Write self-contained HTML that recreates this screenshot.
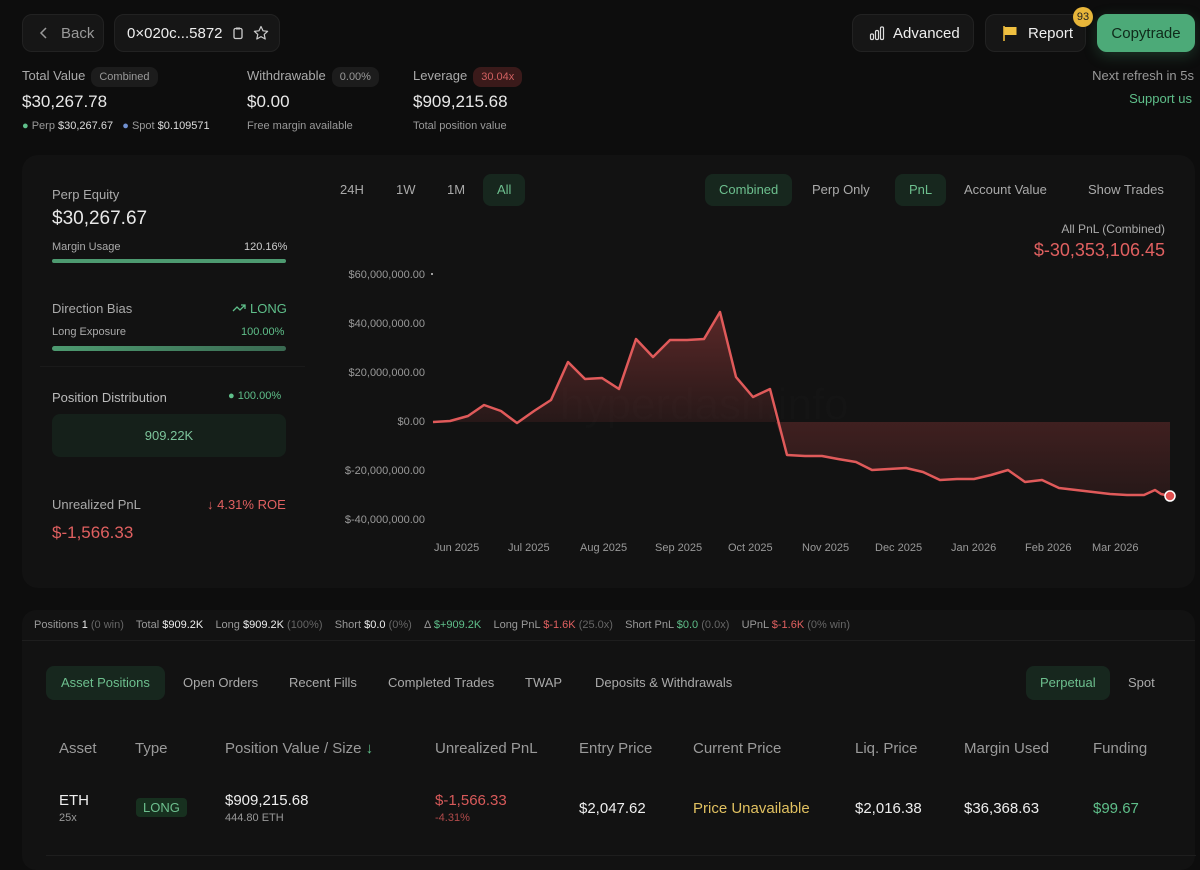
<!DOCTYPE html>
<html><head><meta charset="utf-8"><style>
*{box-sizing:border-box;margin:0;padding:0}
body{width:1200px;height:858px;background:#0d0d0d;font-family:"Liberation Sans",sans-serif;color:#e8e8e8;position:relative;overflow:hidden}
.a{position:absolute;white-space:nowrap}
.btn{position:absolute;background:#161616;border:1px solid #222;border-radius:10px;height:38px;top:14px;display:flex;align-items:center;font-size:15px}
.g{color:#8a8a8a}.gr{color:#5fbf8a}.rd{color:#e06060}
.pill{display:inline-block;background:#1c1c1c;border-radius:8px;padding:4px 8px;font-size:11px;color:#999;margin-left:6px}
.tab{position:absolute;font-size:13px;color:#aaa;height:32px;line-height:32px;padding:0 14px;border-radius:8px}
.tab.on{background:#17271e;color:#6dbf8e}
.th{position:absolute;top:740px;font-size:15px;color:#9a9a9a}
.td{position:absolute;top:792px;font-size:15px;color:#eee}
</style></head><body>
<div class="btn" style="left:22px;width:82px;padding-left:14px;color:#999"><svg width="14" height="14" viewBox="0 0 14 14"><path d="M9 2L4 7l5 5" stroke="#999" stroke-width="1.5" fill="none"/></svg><span style="margin-left:10px">Back</span></div>
<div class="btn" style="left:114px;width:166px;padding-left:12px;color:#eee">0×020c...5872
<svg style="margin-left:8px" width="14" height="14" viewBox="0 0 14 14"><rect x="3" y="2.5" width="8" height="10" rx="1.5" stroke="#ccc" fill="none" stroke-width="1.3"/><rect x="5" y="1.5" width="4" height="2" fill="#ccc"/></svg>
<svg style="margin-left:8px" width="16" height="16" viewBox="0 0 16 16"><path d="M8 1.5l2 4.3 4.6.5-3.4 3.1 1 4.6L8 11.6 3.8 14l1-4.6L1.4 6.3 6 5.8z" stroke="#ccc" fill="none" stroke-width="1.2" stroke-linejoin="round"/></svg></div>
<div class="btn" style="left:852px;width:122px;padding-left:16px;color:#eee"><svg width="16" height="16" viewBox="0 0 16 16" fill="none" stroke="#ddd" stroke-width="1.2"><rect x="1.5" y="9" width="3" height="5.5" rx="1.2"/><rect x="6.5" y="5.5" width="3" height="9" rx="1.2"/><rect x="11.5" y="2" width="3" height="12.5" rx="1.2"/></svg><span style="margin-left:8px">Advanced</span></div>
<div class="btn" style="left:985px;width:101px;padding-left:16px;color:#eee"><svg width="16" height="16" viewBox="0 0 16 16"><path d="M2 1v15" stroke="#e8b63a" stroke-width="1.6"/><path d="M2.5 2h12v8h-12z" fill="#f0c040"/></svg><span style="margin-left:10px">Report</span></div>
<div class="a" style="left:1073px;top:7px;width:20px;height:20px;border-radius:10px;background:#e8b63a;color:#222;font-size:11px;text-align:center;line-height:20px">93</div>
<div class="btn" style="left:1097px;width:98px;background:#4caa78;border-color:#4caa78;color:#0f2a1a;justify-content:center;box-shadow:0 4px 14px rgba(76,170,120,.25)">Copytrade</div>
<div class="a g" style="right:6px;top:68px;font-size:13px;color:#999">Next refresh in 5s</div>
<div class="a gr" style="right:8px;top:91px;font-size:13px">Support us</div>

<div class="a" style="left:22px;top:67px;font-size:13px;color:#aaa">Total Value<span class="pill">Combined</span></div>
<div class="a" style="left:22px;top:92px;font-size:17px">$30,267.78</div>
<div class="a" style="left:22px;top:120px;font-size:11px;color:#999"><span style="color:#5fbf8a">●</span> Perp <span style="color:#ddd">$30,267.67</span> &nbsp;&nbsp;<span style="color:#7090d0">●</span> Spot <span style="color:#ddd">$0.109571</span></div>
<div class="a" style="left:247px;top:67px;font-size:13px;color:#aaa">Withdrawable<span class="pill">0.00%</span></div>
<div class="a" style="left:247px;top:92px;font-size:17px">$0.00</div>
<div class="a" style="left:247px;top:120px;font-size:11px;color:#999">Free margin available</div>
<div class="a" style="left:413px;top:67px;font-size:13px;color:#aaa">Leverage<span class="pill" style="background:#3a1a1a;color:#d06060">30.04x</span></div>
<div class="a" style="left:413px;top:92px;font-size:17px">$909,215.68</div>
<div class="a" style="left:413px;top:120px;font-size:11px;color:#999">Total position value</div>

<div class="a" style="left:22px;top:155px;width:1173px;height:433px;background:#121212;border-radius:16px"></div>
<div class="a" style="left:52px;top:187px;font-size:13px;color:#aaa">Perp Equity</div>
<div class="a" style="left:52px;top:208px;font-size:19px">$30,267.67</div>
<div class="a" style="left:52px;top:241px;font-size:11px;color:#aaa">Margin Usage</div>
<div class="a" style="left:244px;top:241px;font-size:11px;color:#ccc">120.16%</div>
<div class="a" style="left:52px;top:259px;width:234px;height:4px;border-radius:2px;background:#4d9a70"></div>
<div class="a" style="left:52px;top:301px;font-size:13px;color:#aaa">Direction Bias</div>
<div class="a gr" style="left:232px;top:301px;font-size:13px"><svg width="14" height="10" viewBox="0 0 14 10" style="margin-right:4px"><path d="M1 8l4-4 3 3 5-5M9 2h4v4" stroke="#5fbf8a" stroke-width="1.3" fill="none"/></svg>LONG</div>
<div class="a" style="left:52px;top:326px;font-size:11px;color:#aaa">Long Exposure</div>
<div class="a gr" style="left:241px;top:326px;font-size:11px">100.00%</div>
<div class="a" style="left:52px;top:346px;width:234px;height:5px;border-radius:3px;background:linear-gradient(90deg,#4d9a70,#3a6a52)"></div>
<div class="a" style="left:40px;top:366px;width:265px;height:1px;background:#1a1a1a"></div>
<div class="a" style="left:52px;top:390px;font-size:13px;color:#bbb">Position Distribution</div>
<div class="a gr" style="left:228px;top:390px;font-size:11px">● 100.00%</div>
<div class="a" style="left:52px;top:414px;width:234px;height:43px;border-radius:8px;background:#15201a;color:#7cc49b;font-size:13px;text-align:center;line-height:43px">909.22K</div>
<div class="a" style="left:52px;top:497px;font-size:13px;color:#aaa">Unrealized PnL</div>
<div class="a rd" style="left:207px;top:497px;font-size:13px">↓ 4.31% ROE</div>
<div class="a rd" style="left:52px;top:523px;font-size:17px">$-1,566.33</div>

<div class="tab" style="left:326px;top:174px">24H</div>
<div class="tab" style="left:382px;top:174px">1W</div>
<div class="tab" style="left:433px;top:174px">1M</div>
<div class="tab on" style="left:483px;top:174px">All</div>
<div class="tab on" style="left:705px;top:174px">Combined</div>
<div class="tab" style="left:798px;top:174px">Perp Only</div>
<div class="tab on" style="left:895px;top:174px">PnL</div>
<div class="tab" style="left:950px;top:174px">Account Value</div>
<div class="tab" style="left:1074px;top:174px">Show Trades</div>
<div class="a" style="right:35px;top:222px;font-size:12px;color:#aaa">All PnL (Combined)</div>
<div class="a rd" style="right:35px;top:240px;font-size:18px">$-30,353,106.45</div>

<div class="a" style="left:336px;top:268px;font-size:11px;color:#999;width:89px;text-align:right;line-height:14px">
<div style="position:absolute;right:0;top:0">$60,000,000.00</div>
<div style="position:absolute;right:0;top:49px">$40,000,000.00</div>
<div style="position:absolute;right:0;top:98px">$20,000,000.00</div>
<div style="position:absolute;right:0;top:147px">$0.00</div>
<div style="position:absolute;right:0;top:196px">$-20,000,000.00</div>
<div style="position:absolute;right:0;top:245px">$-40,000,000.00</div></div>
<div class="a" style="left:432px;top:542px;font-size:11px;color:#999">
<span style="position:absolute;left:2px">Jun&nbsp;2025</span><span style="position:absolute;left:76px">Jul&nbsp;2025</span><span style="position:absolute;left:148px">Aug&nbsp;2025</span><span style="position:absolute;left:223px">Sep&nbsp;2025</span><span style="position:absolute;left:296px">Oct&nbsp;2025</span><span style="position:absolute;left:370px">Nov&nbsp;2025</span><span style="position:absolute;left:443px">Dec&nbsp;2025</span><span style="position:absolute;left:519px">Jan&nbsp;2026</span><span style="position:absolute;left:593px">Feb&nbsp;2026</span><span style="position:absolute;left:660px">Mar&nbsp;2026</span></div>
<div class="a" style="left:560px;top:380px;font-size:44px;color:#141414">hyperdash.info</div>
<svg class="a" style="left:0;top:0" width="1200" height="600">
<defs><linearGradient id="f" x1="0" y1="0" x2="0" y2="1"><stop offset="0" stop-color="#e05050" stop-opacity=".35"/><stop offset="1" stop-color="#e05050" stop-opacity=".1"/></linearGradient>
<linearGradient id="f2" x1="0" y1="0" x2="0" y2="1"><stop offset="0" stop-color="#e05050" stop-opacity=".22"/><stop offset="1" stop-color="#e05050" stop-opacity=".1"/></linearGradient></defs>
<circle cx="432" cy="274" r="1" fill="#ccc"/>
<path d="M433 422 L450 421 468 416 484 405 501 411 517 423 534 411 551 400 568 362 585 379 602 378 619 389 636 339 653 357 670 340 687 340 704 339 720 312 736 377 753 397 770 389 L776 422 Z" fill="url(#f)"/>
<path d="M776 422 L787 455 805 456 822 456 838 459 856 462 872 470 889 469 906 468 923 472 940 480 957 479 974 479 991 475 1008 470 1025 482 1042 480 1059 488 1076 490 1093 492 1110 494 1127 495 1144 495 1155 490 1161 494 1170 496 L1170 422 Z" fill="url(#f2)"/>
<path d="M433 422 L450 421 468 416 484 405 501 411 517 423 534 411 551 400 568 362 585 379 602 378 619 389 636 339 653 357 670 340 687 340 704 339 720 312 736 377 753 397 770 389 787 455 805 456 822 456 838 459 856 462 872 470 889 469 906 468 923 472 940 480 957 479 974 479 991 475 1008 470 1025 482 1042 480 1059 488 1076 490 1093 492 1110 494 1127 495 1144 495 1155 490 1161 494 1170 496" fill="none" stroke="#e05a5a" stroke-width="2.5" stroke-linejoin="round"/>
<circle cx="1170" cy="496" r="5" fill="#e05050" stroke="#fff" stroke-width="1.5"/>
</svg>

<div class="a" style="left:22px;top:610px;width:1173px;height:260px;background:#121212;border-radius:14px"></div>
<div class="a" style="left:22px;top:640px;width:1173px;height:1px;background:#1e1e1e"></div>
<div class="a" style="left:34px;top:619px;font-size:11px;color:#999">Positions <span style="color:#eee">1</span> <span style="color:#666">(0 win)</span> &nbsp;&nbsp; Total <span style="color:#eee">$909.2K</span> &nbsp;&nbsp; Long <span style="color:#eee">$909.2K</span> <span style="color:#666">(100%)</span> &nbsp;&nbsp; Short <span style="color:#eee">$0.0</span> <span style="color:#666">(0%)</span> &nbsp;&nbsp; Δ <span class="gr">$+909.2K</span> &nbsp;&nbsp; Long PnL <span class="rd">$-1.6K</span> <span style="color:#666">(25.0x)</span> &nbsp;&nbsp; Short PnL <span class="gr">$0.0</span> <span style="color:#666">(0.0x)</span> &nbsp;&nbsp; UPnL <span class="rd">$-1.6K</span> <span style="color:#666">(0% win)</span></div>

<div class="tab on" style="left:46px;top:666px;height:34px;line-height:34px;padding:0 15px">Asset Positions</div>
<div class="tab" style="left:169px;top:666px;height:34px;line-height:34px">Open Orders</div>
<div class="tab" style="left:275px;top:666px;height:34px;line-height:34px">Recent Fills</div>
<div class="tab" style="left:374px;top:666px;height:34px;line-height:34px">Completed Trades</div>
<div class="tab" style="left:511px;top:666px;height:34px;line-height:34px">TWAP</div>
<div class="tab" style="left:581px;top:666px;height:34px;line-height:34px">Deposits &amp; Withdrawals</div>
<div class="tab on" style="left:1026px;top:666px;height:34px;line-height:34px">Perpetual</div>
<div class="tab" style="left:1114px;top:666px;height:34px;line-height:34px">Spot</div>

<div class="th" style="left:59px">Asset</div>
<div class="th" style="left:135px">Type</div>
<div class="th" style="left:225px">Position Value / Size <span class="gr">↓</span></div>
<div class="th" style="left:435px">Unrealized PnL</div>
<div class="th" style="left:579px">Entry Price</div>
<div class="th" style="left:693px">Current Price</div>
<div class="th" style="left:855px">Liq. Price</div>
<div class="th" style="left:964px">Margin Used</div>
<div class="th" style="left:1093px">Funding</div>
<div class="td" style="left:59px;top:792px">ETH</div>
<div class="a" style="left:59px;top:812px;font-size:11px;color:#999">25x</div>
<div class="a" style="left:136px;top:798px;background:#17301f;color:#6dbf8e;font-size:13px;padding:2px 7px;border-radius:4px">LONG</div>
<div class="td" style="left:225px">$909,215.68</div>
<div class="a" style="left:225px;top:812px;font-size:11px;color:#999">444.80 ETH</div>
<div class="td" style="left:435px;color:#d85a5a">$-1,566.33</div>
<div class="a" style="left:435px;top:812px;font-size:11px;color:#b04a4a">-4.31%</div>
<div class="td" style="left:579px;top:800px">$2,047.62</div>
<div class="td" style="left:693px;top:800px;color:#e0c060">Price Unavailable</div>
<div class="td" style="left:855px;top:800px">$2,016.38</div>
<div class="td" style="left:964px;top:800px">$36,368.63</div>
<div class="td" style="left:1093px;top:800px;color:#5fbf8a">$99.67</div>
<div class="a" style="left:46px;top:855px;width:1150px;height:1px;background:#1e1e1e"></div>
</body></html>
